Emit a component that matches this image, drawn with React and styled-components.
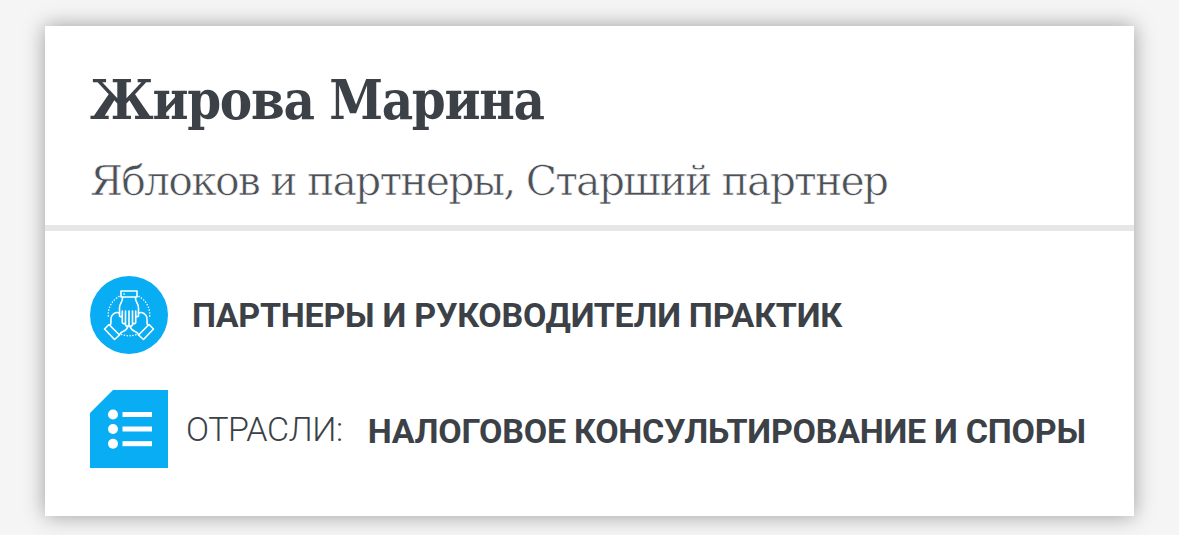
import styled, { createGlobalStyle } from 'styled-components';

const GlobalStyle = createGlobalStyle`
  * {
    box-sizing: border-box;
  }

  body {
    margin: 0;
    background-color: #f5f5f5;
    color: #3c4147;
    font-family: Roboto, sans-serif;
  }
`;

const Page = styled.main`
  height: 535px;
  padding: 26px 45px 19px;
  overflow: hidden;
`;

const Card = styled.article`
  height: 490px;
  background-color: #fff;
  box-shadow: 0 0 20px rgba(0, 0, 0, 0.36);
`;

const CardHeader = styled.header`
  height: 205px;
  padding: 39px 45px 0;
  border-bottom: 6px solid #e7e7e7;
  white-space: nowrap;
`;

const Name = styled.h1`
  margin: 0;
  font: 700 54px/70px 'Roboto Slab', 'DejaVu Serif Condensed', 'DejaVu Serif', serif;
  letter-spacing: -1.3px;
`;

/* the white stroke thins the strokes down to a light weight */
const Position = styled.p`
  margin: 11px 0 0;
  color: #4c5057;
  font: 300 41px/70px 'Roboto Slab', 'DejaVu Serif', serif;
  letter-spacing: -1.84px;
  -webkit-text-stroke: 0.65px #fff;
`;

const Details = styled.div`
  display: flex;
  flex-direction: column;
  gap: 36px;
  padding: 45px 0 0 45px;
`;

const Row = styled.div`
  display: flex;
  align-items: center;
  height: 78px;
  white-space: nowrap;

  svg {
    flex-shrink: 0;
  }
`;

const Label = styled.span`
  margin-left: 18px;
  font-size: 34px;
  font-weight: 300;
  line-height: 40px;
  letter-spacing: -0.4px;
`;

const Value = styled.strong`
  margin-left: ${({ $gap }) => $gap}px;
  padding-top: ${({ $drop }) => $drop || 0}px;
  font-size: 34px;
  font-weight: 700;
  line-height: 40px;
  letter-spacing: -0.26px;
`;

const SideHand = () => (
  <>
    <path d="M19 48.5 29.5 59 24.5 63.5 14.5 53Z" />
    <path d="M20.5 49C22 46 19.5 42.5 22 39.5L24 37.5Q27 35.8 29.5 37.2M29.5 58.5C31.5 54.5 34.5 56 36.5 53L38 50.5" />
  </>
);

const HandsIcon = () => (
  <svg width="78" height="78" viewBox="0 0 78 78" fill="none">
    <circle cx="39" cy="39" r="39" fill="#09adf4" />
    <g stroke="#fff" strokeWidth="1.6" strokeLinecap="round" strokeLinejoin="round">
      <path
        d="M29 20.5A20.7 20.7 0 0 0 18.5 42M49 20.5A20.7 20.7 0 0 1 59.5 42M31.5 58.5Q39 61 47 58.5"
        strokeWidth="1.5"
        strokeDasharray="0.1 2.8"
      />
      <SideHand />
      <g transform="matrix(-1 0 0 1 78 0)">
        <SideHand />
      </g>
      <path d="M31 15H47V21H31ZM34 18H34.2" />
      <path d="M32.5 21.5C33 26 29.5 27 29.5 32V40Q31 42 32.3 39V46.5Q34 49 35.5 46.5V35M35.5 46V49Q37.2 51.5 39 49V35M39 49Q40.8 51.5 42.5 49V35M42.5 46.5Q44.2 49 45.7 46.5V39Q47 42 48.5 40V32C48.5 27 45 26 45.5 21.5M32.3 39V35M45.7 39V35" />
    </g>
  </svg>
);

const ListIcon = () => (
  <svg width="78" height="78" viewBox="0 0 78 78">
    <path d="M23 0H78V78H0V23Z" fill="#09adf4" />
    <g fill="#fff">
      {[24.5, 39, 53.7].map((y) => (
        <g key={y}>
          <circle cx="23" cy={y} r="5" />
          <rect x="32.5" y={y - 2.5} width="29.5" height="5" />
        </g>
      ))}
    </g>
  </svg>
);

const App = () => (
  <>
    <GlobalStyle />
    <Page>
      <Card>
        <CardHeader>
          <Name>Жирова Марина</Name>
          <Position>Яблоков и партнеры, Старший партнер</Position>
        </CardHeader>
        <Details>
          <Row>
            <HandsIcon />
            <Value $gap={24}>ПАРТНЕРЫ И РУКОВОДИТЕЛИ ПРАКТИК</Value>
          </Row>
          <Row>
            <ListIcon />
            <Label>ОТРАСЛИ:</Label>
            <Value $gap={25} $drop={3}>НАЛОГОВОЕ КОНСУЛЬТИРОВАНИЕ И СПОРЫ</Value>
          </Row>
        </Details>
      </Card>
    </Page>
  </>
);

export default App;
